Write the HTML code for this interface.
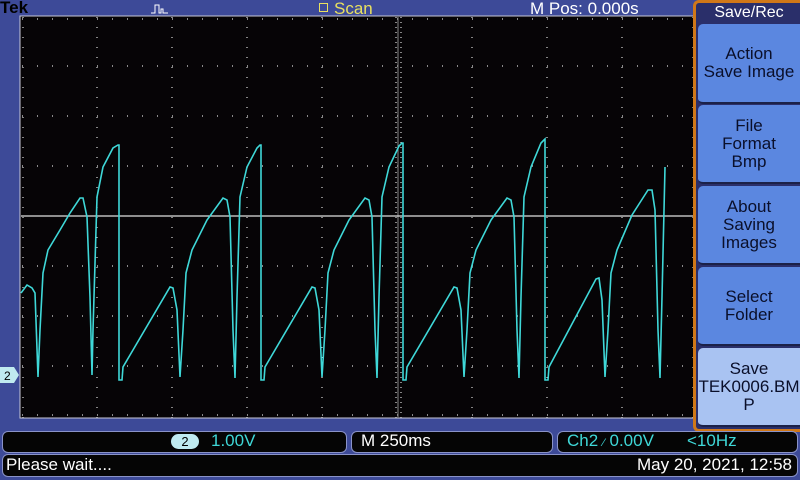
<!DOCTYPE html>
<html><head><meta charset="utf-8"><style>
*{margin:0;padding:0;box-sizing:border-box}
body{width:800px;height:480px;background:#3d4a98;position:relative;overflow:hidden;font-family:"Liberation Sans",sans-serif}
.t{position:absolute;white-space:nowrap}
.btn{position:absolute;left:698px;width:102px;background:#5b87e0;border-radius:5px 0 0 5px;color:#0a0f2a;font-size:17px;line-height:18px;text-align:center;display:flex;align-items:center;justify-content:center;border-bottom:2px solid #1b2148}
.box{position:absolute;border:1px solid #8a93c8;border-radius:6px;background:#050505}
</style></head><body>
<div class="t" style="left:0;top:-2px;font-weight:bold;font-size:17px;color:#000">Tek</div>
<svg style="position:absolute;left:150px;top:3px" width="20" height="12"><path d="M1 10H5V2H9V10H11V6H13V10H18" stroke="#fff" fill="none" stroke-width="1"/></svg>
<div class="t" style="left:319px;top:3px;width:9px;height:9px;border:1px solid #e8e060"></div>
<div class="t" style="left:334px;top:-1px;font-size:17px;color:#e8e060">Scan</div>
<div class="t" style="left:530px;top:-1px;font-size:17px;color:#fff">M Pos: 0.000s</div>
<svg style="position:absolute;left:0;top:0" width="800" height="480">
<rect x="20" y="16" width="680" height="402" fill="#060406" stroke="#c8c8d8" stroke-width="1"/>
<g stroke="#d8d8d8" stroke-width="1.2">
<path d="M97 17V418M172 17V418M247 17V418M322 17V418M472 17V418M547 17V418M622 17V418" stroke-dasharray="1 9"/>
<path d="M22 66H700M22 116H700M22 166H700M22 266H700M22 316H700M22 366H700" stroke-dasharray="1 14"/>
<path d="M22 19H700M22 415H700" stroke-dasharray="1 14"/>
<path d="M23 17V418M693 17V418" stroke-dasharray="1 9"/>
<path d="M396 17V418M401 17V418" stroke-dasharray="1 4"/>
</g>
<path d="M398 17V418" stroke="#888" stroke-width="1"/>
<path d="M21 216H700" stroke="#e0e0e0" stroke-width="1.3"/>
<polyline fill="none" stroke="#3fd8d8" stroke-width="1.6" points="21,293 27,285 32,288 35,293 38,377 40,330 43,273 48,250 60,230 70,213 80,198 83,198 87,217 90,297 92,375 93,330 97,197 103,167 113,148 118,145 119,145 119,380 122,380 123,367 170,287 173,288 177,310 180,377 183,330 186,273 192,250 207,220 223,198 227,200 230,217 233,330 235,378 237,297 240,197 247,167 257,148 260,145 261,145 261,380 264,380 265,367 312,287 315,288 319,310 322,377 325,330 328,273 334,250 349,220 365,198 369,200 372,217 375,330 377,378 379,297 382,197 389,167 399,146 402,143 403,143 403,380 406,380 407,367 454,287 457,288 461,310 464,377 467,330 470,273 476,250 491,220 507,198 511,200 514,217 517,330 519,378 521,297 524,197 531,167 541,143 544,140 545,139 545,380 548,380 549,367 596,279 599,278 602,300 605,377 608,330 611,273 617,250 632,215 648,190 652,190 655,210 658,330 660,378 662,297 665,167"/>
<path d="M0 367H14L19 375L14 383H0Z" fill="#bfeaf0"/>
<text x="4" y="380" font-family="Liberation Sans" font-size="12" fill="#000">2</text>
</svg>
<div style="position:absolute;left:693px;top:0;width:107px;height:432px;background:#2a2f6a;border:3px solid #d07818;border-right:none;border-radius:6px 0 0 6px"></div>
<div class="t" style="left:698px;top:4px;width:102px;text-align:center;font-size:16px;color:#fff">Save/Rec</div>
<div class="btn" style="top:24px;height:80px">Action<br>Save Image</div>
<div class="btn" style="top:105px;height:79px">File<br>Format<br>Bmp</div>
<div class="btn" style="top:186px;height:79px">About<br>Saving<br>Images</div>
<div class="btn" style="top:267px;height:79px">Select<br>Folder</div>
<div class="btn" style="top:348px;height:79px;background:#a9c3f2">Save<br>TEK0006.BM<br>P</div>
<div class="box" style="left:2px;top:431px;width:345px;height:22px"></div>
<div class="t" style="left:171px;top:434px;width:28px;height:15px;border-radius:8px;background:#bfeaf0;color:#000;font-size:13px;text-align:center;line-height:15px">2</div>
<div class="t" style="left:211px;top:431px;font-size:17px;color:#3fd8d8">1.00V</div>
<div class="box" style="left:351px;top:431px;width:202px;height:22px"></div>
<div class="t" style="left:361px;top:431px;font-size:17px;color:#fff">M 250ms</div>
<div class="box" style="left:557px;top:431px;width:241px;height:22px"></div>
<div class="t" style="left:567px;top:431px;font-size:17px;color:#3fd8d8">Ch2 <span style="font-size:11px">⁄</span> 0.00V &nbsp;&nbsp;&nbsp;&nbsp;&nbsp;&nbsp;&lt;10Hz</div>
<div class="box" style="left:2px;top:454px;width:796px;height:23px"></div>
<div class="t" style="left:6px;top:455px;font-size:17px;color:#fff">Please wait....</div>
<div class="t" style="right:8px;top:455px;font-size:17px;color:#fff">May 20, 2021, 12:58</div>
</body></html>
